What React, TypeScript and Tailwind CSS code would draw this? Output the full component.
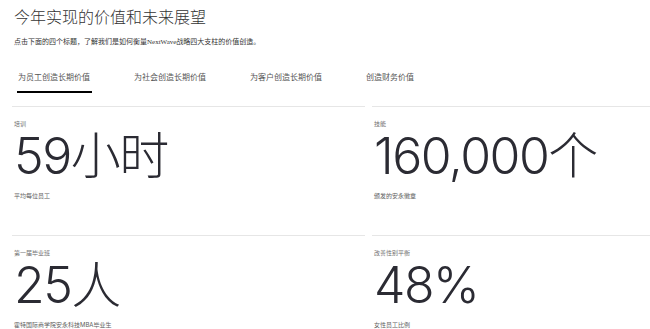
const tabs = ["为员工创造长期价值", "为社会创造长期价值", "为客户创造长期价值", "创造财务价值"]

const stats = [
  { label: "培训", value: "59小时", note: "平均每位员工" },
  { label: "技能", value: "160,000个", note: "颁发的安永徽章" },
  { label: "第一届毕业班", value: "25人", note: "霍特国际商学院安永科技MBA毕业生" },
  { label: "改善性别平衡", value: "48%", note: "女性员工比例" },
]

const App = () => {
  return (
    <div className="w-[650px] h-[329px] overflow-hidden bg-white font-['Inter','Noto_Sans_CJK_SC',sans-serif]">
      <div className="pl-[14px] pt-[5px]">
        <h1 className="text-[16px] leading-[24px] font-light text-[#333]">今年实现的价值和未来展望</h1>
        <p className="mt-[8px] text-[7px] leading-[10px] text-[#333] font-['Liberation_Serif','Noto_Sans_CJK_SC',serif]">
          点击下面的四个标题，了解我们是如何衡量NextWave战略四大支柱的价值创造。
        </p>
      </div>

      <div className="flex pl-[18px] mt-[24px]">
        {tabs.map((t, i) => (
          <div key={t} className="w-[116px] flex flex-col">
            <span className="text-[8px] leading-[12px] text-[#555]">{t}</span>
            {i === 0 ? (
              <div className="mt-[8px] h-[2px] w-[75px] -ml-[1px] bg-black" />
            ) : (
              <div className="mt-[8px] h-[2px]" />
            )}
          </div>
        ))}
      </div>

      <div className="grid grid-cols-[353px_1fr] gap-x-[7px] pl-[12px] mt-[13px]">
        {stats.map((s) => (
          <div key={s.label} className="h-[129px] border-t border-[#e6e6e6] pl-[2px] pt-[12px]">
            <div className="text-[6px] leading-[9px] text-[#707070]">{s.label}</div>
            <div className="mt-[2px] text-[50px] leading-[52px] font-light text-[#2b2b33] tracking-[-1.5px]">{s.value}</div>
            <div className="mt-[9px] text-[6px] leading-[9px] text-[#606060]">{s.note}</div>
          </div>
        ))}
      </div>
    </div>
  )
}

export default App
